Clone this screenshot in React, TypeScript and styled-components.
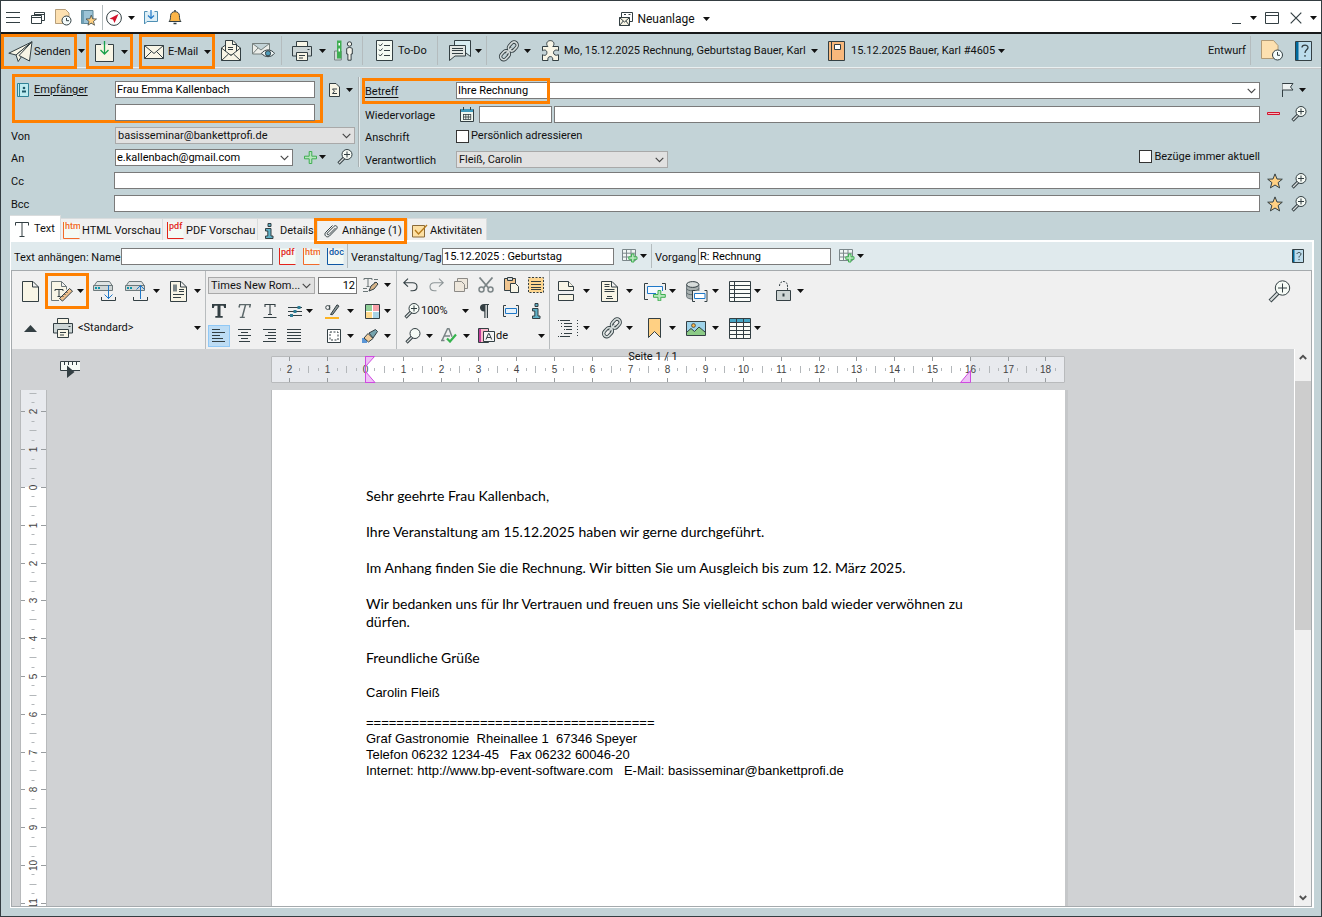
import React from 'react';
import styled, { createGlobalStyle, css } from 'styled-components';

const INK = '#333f43';
const CREAM = '#f8f5e6';
const ACCENT = '#ff8000';
const GREEN = '#3fae52';
const BLUE = '#1f78c8';
const ORANGE = '#ffd083';

const Global = createGlobalStyle`
  *, *::before, *::after { box-sizing: border-box; }
  html, body { margin: 0; }
  body { font-family: Roboto, 'Open Sans', sans-serif; font-size: 11px; line-height: 16px; color: #111; }
  button, input, select { font: inherit; color: inherit; margin: 0; }
  svg { display: block; flex: none; }
`;

/* ---------- icons ---------- */

const ext = (label: string, color: string): [number, number, React.ReactNode] => [
  17, 17,
  <>
    <path d="M.5 .5h16v16H.5z" fill="#f4faf4" />
    <path d="M.5 0v16.500h16" fill="none" stroke={color} />
    <text x="2" y="7" fontSize="9" fontWeight="500" fontFamily="Roboto, sans-serif" fill={color}>{label}</text>
  </>,
];

const lens = (
  <>
    <path d="M7.500 8.500 1.500 14.500" stroke={INK} strokeWidth="3.200" />
    <path d="M7.500 8.500 2 14" stroke="#d9dddd" strokeWidth="1.300" />
    <circle cx="10" cy="5.500" r="5" fill="#f6fbf6" stroke={INK} />
  </>
);

const printer = (
  <g stroke={INK}>
    <path d="M4.500 6V.5h11V6" fill={CREAM} />
    <path d="M.5 5.500h19v9.500H.5z" fill="#cdd6d6" />
    <path d="M15.500 8.500h2" />
    <path d="M4.500 11.500h11v8h-11z" fill={CREAM} />
    <path d="M7 14.500h6M7 17h4" />
  </g>
);

const link = (
  <g fill="none" transform="rotate(-48 11 11)">
    <g stroke={INK} strokeWidth="3.800">
      <rect x="-1" y="7.500" width="11" height="7" rx="3.500" />
      <rect x="12" y="7.500" width="11" height="7" rx="3.500" />
      <path d="M6.500 11h9" />
    </g>
    <g stroke="#d5dcdb" strokeWidth="1.900">
      <rect x="-1" y="7.500" width="11" height="7" rx="3.500" />
      <rect x="12" y="7.500" width="11" height="7" rx="3.500" />
      <path d="M6.500 11h9" />
    </g>
  </g>
);

const star = (
  <path
    d="M8 .9 10 6l5.300.2-4.200 3.400 1.500 5.300L8 12l-4.600 2.900 1.500-5.300L.7 6.200 6 6z"
    fill={ORANGE} stroke={INK}
  />
);

const helpBook = (
  <>
    <path d="M.5 .5h16v19H.5z" fill="#bcdcec" stroke={INK} />
    <path d="M1 1h2.500v18H1z" fill="#00699c" />
    <path d="M7 6.500c0-3 6-3.200 6 0 0 2.300-3 2.500-3 5.500M10 14v1.800" fill="none" stroke={INK} strokeWidth="1.300" />
  </>
);

const bars = (rows: [number, number][]) => (
  <g stroke={INK}>
    {rows.map(([a, b], i) => <path key={i} d={`M${a} ${i * 3 + 0.500}H${b}`} />)}
  </g>
);

const serverBox = (
  <g>
    <path d="M1 5 4 .5h12.500l3 4.500" fill="#dfe4e4" stroke="#6d787a" />
    <path d="M.5 4.500h19v5H.5z" fill="#cfd6d6" stroke="#6d787a" />
    <path d="M2 7h2M5 7h2" stroke="#0d93a8" strokeWidth="2" />
  </g>
);

const tablePlus = (
  <>
    <path d="M.5 .5h13v11H.5zM4.500 .5v11M9 .5v11M.5 4.200h13M.5 8h13" fill="#f1f6f5" stroke="#7b878a" />
    <path d="M9.500 5h2.500v2.800h3v2.500h-3V13H9.500v-2.700H6.800V7.800h2.700z" fill="#b7e6bd" stroke={GREEN} />
  </>
);

const foldedPage = <path d="M.5 .5h10.500l5.500 5.500v14.500H.5zM10.500 .5v5.500h6" fill={CREAM} stroke={INK} />;

const icons: Record<string, [number, number, React.ReactNode]> = {
  caret: [7, 4, <path d="M0 0h7L3.500 4z" fill="#111" />],
  chevron: [9, 6, <path d="M.7 .8 4.500 4.600 8.300 .8" fill="none" stroke="#454545" strokeWidth="1.100" />],
  menu: [14, 12, <path d="M0 .5h14M0 5.500h14M0 10.500h14" stroke={INK} />],
  windows: [14, 12, (
    <g fill="#fff" stroke={INK}>
      <path d="M3.500 3V.5h10v8H11" /><path d="M3 2.500h10" />
      <path d="M.5 3.500h10v8H.5z" /><path d="M.5 5.500h10" />
    </g>
  )],
  docClock: [17, 17, (
    <>
      <path d="M.5 .5h10L14 4v10.500H.5z" fill="#fde0b0" stroke="#a58a62" strokeWidth=".8" />
      <circle cx="11.500" cy="11.500" r="4.500" fill="#f4fbfb" stroke={INK} />
      <path d="M11.500 9v2.700H14" fill="none" stroke={INK} />
    </>
  )],
  docClockBig: [22, 21, (
    <>
      <path d="M.5 .5h12l4.500 5v13H.5z" fill="#fde0b0" stroke="#a58a62" strokeWidth=".8" />
      <circle cx="16.500" cy="15" r="5" fill="#f4fbfb" stroke={INK} />
      <path d="M16.500 12v3.300H19" fill="none" stroke={INK} />
    </>
  )],
  bookStar: [16, 16, (
    <>
      <path d="M.5 .5h11.500v13H.5z" fill="#9cc3d6" stroke="#5e8798" />
      <path d="M.5 .5H3v13H.5z" fill="#6f9fb5" />
      <g transform="translate(4.500 4.500) scale(.72)">{star}</g>
    </>
  )],
  compass: [16, 16, (
    <>
      <circle cx="8" cy="8" r="7.400" fill="#fff" stroke={INK} />
      <path d="M12.500 4 3.500 8.800 7 9.600 8.500 13z" fill="#d3122c" />
    </>
  )],
  chatDown: [14, 15, (
    <>
      <path d="M3.500 1.500H.5V14l2.500-2.500h10.500v-10h-3" fill="#dceef6" stroke="#4e8fb4" />
      <path d="M7 0v8.500M4 5.500l3 3 3-3" fill="none" stroke={BLUE} strokeWidth="1.200" />
    </>
  )],
  bell: [14, 15, (
    <>
      <path d="M1 11.500c1.600-1.500 1.400-3.500 1.600-6C2.900 2.800 4.600 1.700 7 1.700s4.100 1.100 4.400 3.800c.2 2.500 0 4.500 1.600 6z" fill="#fbb548" stroke={INK} />
      <path d="M5.500 13.500h3M7 0v1.500" stroke={INK} strokeWidth="1.600" />
    </>
  )],
  mailStack: [14, 14, (
    <g stroke={INK} fill="#fff">
      <path d="M2.500 5V.5h11v9H11" /><path d="M9.500 2.500h2M5 2.500h2" />
      <path d="M.5 5.500h10v8H.5z" fill={CREAM} /><path d="M.5 5.500 5.500 10l5-4.500M.5 13.500 4.300 9M10.500 13.500 6.900 9" fill="none" />
    </g>
  )],
  minimize: [9, 12, <path d="M0 11.500h9" stroke={INK} />],
  maximize: [14, 12, <path d="M.5 .5h13v11H.5zM.5 3.500h13" fill="none" stroke={INK} />],
  close: [12, 12, <path d="M.7 .7 11.300 11.300M11.300 .7.7 11.300" stroke={INK} strokeWidth="1.200" />],

  plane: [25, 22, (
    <g fill={CREAM} stroke={INK} strokeLinejoin="round">
      <path d="M24 .8 .8 12.200 8 14z" />
      <path d="M24 .8 8 14l2.200 6.500 3-4.500" />
      <path d="M24 .8 11 14.500 21.500 20z" />
    </g>
  )],
  inbox: [20, 21, (
    <>
      <path d="M6 3.500H.5v17h18v-17H13" fill={CREAM} stroke={INK} />
      <path d="M9.500 0v12.500M5.500 9l4 4 4-4" fill="none" stroke="#18a04a" strokeWidth="1.300" />
    </>
  )],
  mail: [20, 14, (
    <g fill={CREAM} stroke={INK}>
      <path d="M.5 .5h19v13H.5z" />
      <path d="m.5 .5 9.500 8 9.500-8M.5 13.500l7-7M19.500 13.500l-7-7" fill="none" />
    </g>
  )],
  mailOpen: [20, 21, (
    <g fill={CREAM} stroke={INK}>
      <path d="M.5 8 4.500 5v10z" /><path d="M19.500 8 15.500 5v10z" />
      <path d="M4.500 15V.5h7.500l3.500 3.500v11z" /><path d="M11.500 .5v4h4M7 7.500h5M7 9.500h5" fill="none" />
      <path d="M.5 8v12.500h19V8L10 15.500z" /><path d="m.5 20.500 7-6.500M19.500 20.500l-7-6.500" />
    </g>
  )],
  mailEye: [23, 15, (
    <>
      <path d="M.5 .5h17v10.500H.5zM.5 .5 9 7 17.500 .5M.5 11 6 5" fill="#eceeea" stroke="#76807f" />
      <path d="M9.500 10.300c3.500-4.500 9.500-4.500 13 0-3.500 4.500-9.500 4.500-13 0z" fill="#eef5f5" stroke={INK} />
      <circle cx="16" cy="10.300" r="2.600" fill="#4f9cba" stroke={INK} />
    </>
  )],
  printer: [20, 20, printer],
  people: [20, 21, (
    <>
      <path d="M4 11H.5v9h6.800v-9" fill="#cfd8d6" stroke="#7a8485" />
      <path d="M3 .5h4.500v18H3z" fill={GREEN} /><path d="M4.500 3h1.500v2.500H4.500zM4.500 8.500h1.500v3H4.500z" fill="#fff" />
      <circle cx="15.500" cy="4" r="2.200" fill="#f3f3ea" stroke={INK} />
      <path d="M12.700 8.500c1.500-1.300 4.300-1.300 5.600 0V14h-1.200v6.200h-3.200V14h-1.200z" fill="#f3f3ea" stroke={INK} />
    </>
  )],
  todo: [17, 21, (
    <>
      <path d="M.5 .5h16v20H.5z" fill="#f4faf3" stroke={INK} />
      <path d="m3 4.500 1.300 1.500L6.500 3.500M3 9.500 4.300 11l2.200-2.500M3 14.500 4.300 16l2.200-2.500M8 5.500h6M8 10.500h6M8 15.500h6" fill="none" stroke={INK} />
    </>
  )],
  chat: [22, 21, (
    <>
      <path d="M5.500 5V.5h16v16L17 13" fill="#d8ecf0" stroke={INK} />
      <path d="M.5 5.500h16v10.500H6L.5 20.500z" fill="#e3e7e4" stroke={INK} />
      <path d="M3 8.500h11M3 10.500h11M3 13.500h11" stroke={INK} />
    </>
  )],
  link: [22, 22, <g transform="translate(1 1) scale(.9)">{link}</g>],
  puzzle: [17, 21, (
    <path
      d="M.5 6.500h5.400C3.500 4 5 .6 8.300 .6s4.900 3.400 2.500 5.900h5.700v4.200c-2.600-1.500-5-.2-5 2s2.400 3.300 5 2v5.800h-5.900c.6-2.500-.4-3.900-2.300-3.900s-2.900 1.400-2.300 3.900H.5v-5.800c2.600 1.500 4.400.2 4.400-2s-1.800-3.500-4.400-2z"
      fill={CREAM} stroke={INK}
    />
  )],
  orangeBook: [17, 20, (
    <>
      <path d="M.5 .5h16v19H.5zM3.500 .5v19" fill="#f9b87c" stroke={INK} />
      <path d="M6.500 3.500h6v5h-6z" fill="#fff" stroke={INK} />
    </>
  )],
  help: [17, 20, helpBook],
  helpSmall: [12, 14, (
    <>
      <path d="M.5 .5h11v13H.5z" fill="#bcdcec" stroke={INK} />
      <path d="M1 1h1.500v12H1z" fill="#00699c" />
      <path d="M5 5c0-2 4-2 4 0 0 1.500-2 1.500-2 3.500M7 10v1.200" fill="none" stroke={INK} />
    </>
  )],

  contact: [12, 14, (
    <>
      <path d="M.5 .5h11v13H.5zM2.500 .5v13" fill="#bdebf0" stroke="#2f8296" />
      <circle cx="7" cy="5" r="1.300" fill="#1c5868" /><path d="M5 9.500h4V7.500H5z" fill="#1c5868" />
    </>
  )],
  sumDoc: [11, 14, (
    <>
      <path d="M.5 .5H7L10.500 4v9.500H.5z" fill={CREAM} stroke={INK} />
      <path d="M8 6H3.500l2 2.200-2 2.300H8" fill="none" stroke={INK} />
    </>
  )],
  plus: [13, 13, <path d="M5.200 .5h2.600v4.700h4.700v2.600H7.800v4.700H5.200V7.800H.5V5.200h4.700z" fill="#b7e6bd" stroke={GREEN} />],
  lensPlus: [16, 16, <>{lens}<path d="M10 2.500v6M7 5.500h6" stroke={INK} /></>],
  lens: [16, 16, lens],
  lensBig: [23, 23, (
    <>
      <path d="M11 12 2 21" stroke={INK} strokeWidth="4" /><path d="M11 12 2.500 20.500" stroke="#d9dddd" strokeWidth="2" />
      <circle cx="14.500" cy="8" r="7.200" fill="#f6fbf6" stroke={INK} /><path d="M14.500 3.500v9M10 8h9" stroke={INK} />
    </>
  )],
  calendar: [14, 15, (
    <>
      <path d="M.5 2.500h13v12H.5z" fill="#eef6ef" stroke={INK} />
      <path d="M1 2h12v3H1z" fill="#3f9abb" /><path d="M3.500 0v3M10.500 0v3" stroke={INK} />
      <path d="M3 7.500h8M3 10h8M3 12.500h8M3.500 7v5.500M5.800 7v5.500M8.300 7v5.500M10.700 7v5.500" stroke={INK} strokeWidth=".8" />
    </>
  )],
  flag: [12, 14, <><path d="M.5 0v14" stroke={INK} /><path d="M.5 .5h10.500L8.500 4l2.500 3H.5" fill="#edf2f2" stroke={INK} /></>],
  minus: [13, 4, <path d="M.5 .5h12v2H.5z" fill="#f3b7c0" stroke="#d3122c" />],
  star: [16, 16, star],

  textT: [14, 15, <path d="M.5 3.500V.5h13v3M7 .5v14M4.500 14.500h5" fill="none" stroke={INK} />],
  pdf: ext('pdf', '#e2231a'),
  htm: ext('htm', '#f26a2a'),
  doc: ext('doc', '#0d57a4'),
  info: [9, 16, (
    <path d="M3 .5h3v3H3zM.5 5.500H6v7.500h2v2.500H.5V13h2.300V8H.5z" fill="#5fb0c6" stroke={INK} />
  )],
  clip: [16, 16, (
    <path
      d="M12.500 5 6 11.500c-1 1-2.600-.4-1.600-1.500L11 3.300c1.800-1.800 4.400.6 2.600 2.500L6.500 13c-2.600 2.500-6.300-1-3.700-3.800L9.500 2.500"
      fill="none" stroke={INK}
    />
  )],
  task: [16, 14, (
    <>
      <path d="M.5 1.500h12v11.500H.5z" fill="#fde0a4" stroke="#8a6a3a" />
      <path d="m3 6 3.500 4L15 1" fill="none" stroke="#b57a1d" strokeWidth="1.300" />
    </>
  )],
  tablePlus: [16, 14, tablePlus],

  page: [17, 21, foldedPage],
  pageRuler: [22, 21, (
    <>
      <path d="M8 19.500H.5V.5h10l5 5v3M10.500 .5v5h5" fill={CREAM} stroke="#6d787a" />
      <path d="M4 10V8.500h8V10M8 8.500v7M6.500 15.500h3" fill="none" stroke={INK} />
      <path d="m8.500 17.500 10-10 3 2.600-10 10z" fill="#f0c08c" stroke={INK} />
      <path d="m11.500 15 1 1M13.500 13l1 1M15.500 11l1 1" stroke={INK} />
    </>
  )],
  serverDown: [23, 20, (
    <>{serverBox}<path d="M8.500 16v3.500h14V16" fill="none" stroke={INK} /><path d="M15.500 4v14M11.500 13.500l4 4 4-4" fill="none" stroke={BLUE} /></>
  )],
  serverUp: [23, 20, (
    <>{serverBox}<path d="M8.500 16v3.500h14V16" fill="none" stroke={INK} /><path d="M15.500 18V4M11.500 8.500l4-4 4 4" fill="none" stroke={BLUE} /></>
  )],
  article: [17, 21, (
    <>
      {foldedPage}
      <path d="M3 3.500h4v7H3z" fill="#7c8789" /><path d="M9 8.500h5M9 10.500h5M3 13.500h11M3 16.500h8" stroke={INK} />
    </>
  )],
  up: [13, 7, <path d="M6.500 0 13 7H0z" fill={INK} />],
  textBrush: [16, 14, (
    <>
      <path d="M1 2V.5h8V2M5 .5v8M3.500 8.500h3M11 1.500h4M11 4.500h2M0 10.500h4M0 13.500h5" fill="none" stroke="#6a7577" />
      <path d="m6 13 2-5 5-4 2 2-4 5z" fill="#d7b48a" stroke={INK} />
    </>
  )],
  bold: [14, 14, <path d="M0 4V0h14v4h-1.800L11.500 1.800h-3V12h2.200v1.800H3.300V12h2.200V1.800h-3L1.800 4z" fill={INK} />],
  italic: [14, 14, <path d="M2 3.500 2.800.6H13.300L12.600 3.500M8.600 .6 5.300 13M2.800 13.400h5" fill="none" stroke="#5c686a" strokeWidth="1.500" />],
  underline: [14, 15, <path d="M2 3V.5h10V3M7 .5v10M5 10.500h4M.5 13.500h13" fill="none" stroke={INK} strokeWidth="1.100" />],
  sliders: [15, 12, (
    <>
      <path d="M0 2.500h14M0 6.500h14M0 10.500h14" stroke={INK} />
      <path d="M9.500 1h3v3h-3zM5.500 5h3v3h-3zM2 9h3v3H2z" fill="#2d7d96" />
    </>
  )],
  highlighter: [15, 15, (
    <>
      <path d="M5.500 10.500 12 .8l2 1.300L7.500 10.700z" fill="#8c9799" stroke={INK} />
      <circle cx="2.700" cy="3.500" r="2" fill="none" stroke={INK} strokeWidth=".9" /><path d="M4.700 1v5" stroke={INK} strokeWidth=".9" />
      <path d="M0 14h14" stroke="#fdb425" strokeWidth="2" />
    </>
  )],
  palette: [15, 15, (
    <>
      <path d="M1 1h6.500v6.500H1z" fill="#8fcf97" /><path d="M7.500 1H14v6.500H7.500z" fill="#f7a0a8" />
      <path d="M1 7.500h6.500V14H1z" fill="#ffd98c" /><path d="M7.500 7.500H14V14H7.500z" fill="#a9d4e6" />
      <path d="M.5 .5h14v14H.5z" fill="none" stroke={INK} /><path d="M7.500 1v13M1 7.500h13" stroke="#fff" />
    </>
  )],
  alignLeft: [13, 13, bars([[0, 8], [0, 13], [0, 8], [0, 11], [0, 13]])],
  alignCenter: [13, 13, bars([[0, 13], [3, 10], [0, 13], [3, 10], [1, 12]])],
  alignRight: [13, 13, bars([[0, 13], [5, 13], [2, 13], [5, 13], [0, 13]])],
  alignJustify: [14, 13, bars([[0, 14], [0, 14], [0, 14], [0, 14], [0, 14]])],
  frame: [14, 14, (
    <><path d="M.5 .5h13v13H.5z" fill="#fff" stroke={INK} /><path d="M3 3h8v8H3z" fill="none" stroke={INK} strokeDasharray="2 1.500" /></>
  )],
  brush: [16, 14, (
    <>
      <path d="M0 9h5v5H0z" fill="#5b96d6" />
      <path d="m2 9 4-4.500 5 5L6.500 13z" fill="#f0cd9e" stroke={INK} /><path d="m7 4 6.500-3.500 2 2L11 9z" fill="#75a3ad" stroke={INK} />
    </>
  )],
  undo: [15, 14, <path d="M5 .7 .8 4.700 5 8.700M.8 4.700h8.700c6 0 6 8 0 8H7.500" fill="none" stroke={INK} strokeWidth="1.100" />],
  redo: [15, 14, <path d="M10 .7 14.200 4.700 10 8.700M14.200 4.700H5.500c-6 0-6 8 0 8h2" fill="none" stroke="#8c9496" strokeWidth="1.100" />],
  copies: [14, 14, (
    <g fill="#eee7dc" stroke="#8c8a86"><path d="M3.500 3.500V.5h10v10h-3" /><path d="M.5 3.500h7l3 3v7H.5z" /></g>
  )],
  cut: [16, 16, (
    <>
      <path d="M1.500 .5 11 11.500M14.500 .5 5 11.500" stroke="#7b8486" strokeWidth="1.800" />
      <circle cx="3.500" cy="12.500" r="2.500" fill="none" stroke="#7d8688" strokeWidth="1.500" /><circle cx="12.500" cy="12.500" r="2.500" fill="none" stroke="#7d8688" strokeWidth="1.500" />
    </>
  )],
  paste: [15, 16, (
    <>
      <path d="M.5 1.500h11v12H.5z" fill="#f0c590" stroke={INK} /><path d="M3.500 .5h5v3h-5z" fill="#d9dede" stroke={INK} />
      <path d="M6.500 6.500h5l3 3v6h-8z" fill={CREAM} stroke={INK} />
    </>
  )],
  selectAll: [16, 16, (
    <>
      <path d="M.5 .5h15v15H.5z" fill="#fdd58e" stroke={INK} strokeDasharray="2 1.500" />
      <path d="M3 4.500h10M3 7.500h10M3 10.500h10M3 12.500h10" stroke={INK} />
    </>
  )],
  pilcrow: [9, 14, <path d="M4 0h5v1H8v13H6.800V1H5.500v13H4.300V7.500C-1.400 7.500-1.400 0 4 0z" fill={INK} />],
  field: [16, 12, (
    <><path d="M3 .5H.5v11H3M13 .5h2.500v11H13" fill="none" stroke={INK} /><path d="M2.500 3.500h11v5h-11z" fill="#e6f2fb" stroke={BLUE} /></>
  )],
  spell: [16, 15, (
    <>
      <path d="M1 12.500 6.500 .8h1.500l3 8M3 8h6M0 12.500h3.500" fill="none" stroke="#7a8486" strokeWidth="1.500" />
      <path d="m6 10.500 3 3L15 6.500" fill="none" stroke="#35b34d" strokeWidth="2.200" />
    </>
  )],
  language: [17, 15, (
    <>
      <path d="M.5 .5h10v14H.5z" fill="#fbb9cb" stroke={INK} /><path d="M1 1h2v13H1z" fill="#c23f9b" />
      <path d="M5.500 3.500h11v10h-11z" fill="#f4f4f4" stroke={INK} />
      <path d="m8 11.500 2.500-6h.7l2.500 6M9 9.500h4" fill="none" stroke={INK} />
    </>
  )],
  pageBreak: [17, 21, (
    <g fill={CREAM} stroke={INK}><path d="M.5 9.500v-9h10l5 5v4z" /><path d="M10.500 .5v5h5" /><path d="M.5 13.500h15v6H.5z" /></g>
  )],
  textPage: [17, 21, (
    <>
      {foldedPage}
      <path d="M3.500 3.500h5M3.500 5.500h5M3.500 8.500h10M3.500 10.500h10M6 15.500h5M5 17.500h7" stroke={INK} />
    </>
  )],
  fieldPlus: [22, 20, (
    <>
      <path d="M4 2.500H.5v16H4M18 2.500h3.500V9" fill="none" stroke={INK} />
      <path d="M12 12.500H3.500v-7h15V10" fill="#f5faff" stroke={BLUE} />
      <path d="M14 9.500h2.800v4h4.500v2.800h-4.500v3.500H14v-3.500H9.500v-2.800H14z" fill="#b7e6bd" stroke={GREEN} />
    </>
  )],
  database: [22, 21, (
    <>
      <path d="M.6 3.500v12c0 3.400 12.300 3.400 12.300 0v-12" fill="#a9b1b1" stroke="#69747a" />
      <ellipse cx="6.700" cy="3.500" rx="6.100" ry="2.900" fill="#d7dcdb" stroke={INK} />
      <path d="M.6 7.500c0 3 12.300 3 12.300 0M.6 11.500c0 3 12.300 3 12.300 0" fill="none" stroke="#5c686a" />
      <path d="M6 10h15.500v10.500H6z" fill="#f0f0f0" /><path d="M9 9.500H6.500v11H9M18.500 9.500H21v11h-2.500" fill="none" stroke={INK} />
      <path d="M8.500 12.500h10.500v5H8.500z" fill="#fff" stroke={BLUE} />
    </>
  )],
  list: [22, 21, <path d="M.5 .5h21v20H.5zM5.500 .5v20M.5 4.500h21M.5 8.500h21M.5 12.500h21M.5 16.500h21" fill="#fafcf8" stroke={INK} />],
  lock: [15, 20, (
    <><path d="M3.500 5C3.500-1 11.500-1 11.500 5v4" fill="none" stroke={INK} strokeDasharray="2 1" /><path d="M.5 9.500h14v10H.5z" fill="#ced5d4" stroke={INK} /><path d="M6.500 12.500h2v3h-2z" fill={INK} /></>
  )],
  bullets: [20, 19, (
    <>
      <path d="M0 1.500h1M2 1.500h10M3 4.500h1M6 4.500h8M3 7.500h1M6 7.500h8M6 10.500h1M8 10.500h6M3 14.500h1M6 14.500h8M0 17.500h1M2 17.500h10" stroke={INK} />
      <path d="M19.500 1v18" stroke={INK} strokeDasharray="1 2" />
    </>
  )],
  bookmark: [14, 21, <path d="M.5 .5h12v19L6.500 13.500.5 19.500z" fill={ORANGE} stroke={INK} />],
  image: [20, 15, (
    <>
      <path d="M.5 .5h19v14H.5z" fill="#9ed3ea" />
      <path d="M1 14V11l4-3.500 3.500 3L13 6l6 5v3z" fill="#8ccb86" /><path d="m1 11 4-3.500 3.500 3L13 6l6 5" fill="none" stroke={INK} />
      <circle cx="7.500" cy="4.500" r="1.900" fill="#fbb548" stroke={INK} strokeWidth=".8" /><path d="M.5 .5h19v14H.5z" fill="none" stroke={INK} />
    </>
  )],
  table: [22, 21, (
    <>
      <path d="M.5 .5h21v20H.5z" fill="#fafcf8" /><path d="M.5 .5h21v4H.5z" fill="#45a5c4" />
      <path d="M.5 .5h21v20H.5zM7.500 .5v20M14.500 .5v20M.5 4.500h21M.5 8.500h21M.5 12.500h21M.5 16.500h21" fill="none" stroke={INK} />
    </>
  )],
  rulerPlay: [20, 17, (
    <><path d="M20 .5H.5v9H20" fill="#f6fbf6" stroke={INK} /><path d="M4.500 1v3M8.500 1v3M12.500 1v3M16.500 1v3" stroke={INK} /><path d="M7 4.500 14.500 11 7 17z" fill={INK} /></>
  )],
  scrollUp: [8, 6, <path d="M.8 5 4 1.800 7.200 5" fill="none" stroke="#505050" strokeWidth="1.800" />],
  scrollDown: [8, 6, <path d="M.8 1 4 4.200 7.200 1" fill="none" stroke="#505050" strokeWidth="1.800" />],
};

const Icon = ({ name }: { name: string }) => {
  const [w, h, body] = icons[name];
  return <svg width={w} height={h} viewBox={`0 0 ${w} ${h}`} aria-hidden="true">{body}</svg>;
};

/* ---------- shared parts ---------- */

const AppWindow = styled.div`
  display: flex; flex-direction: column; height: 100vh; min-height: 600px; overflow: hidden;
  border: 1px solid #343d41; background: #c3d3d7;
`;

const Tool = styled.button<{ $w?: number; $pl?: number; $gap?: number; $active?: boolean }>`
  display: flex; flex: none; align-items: center; height: 100%; padding: 0 0 0 ${p => p.$pl ?? 0}px;
  width: ${p => (p.$w ? `${p.$w}px` : 'auto')}; gap: ${p => p.$gap ?? 6}px;
  border: 0; background: none; white-space: nowrap; cursor: pointer;
  ${p => p.$active && css`height: 22px; background: #bddcf4; border: 1px solid #90c8f6;`}
`;

const Marked = styled.div<{ $w: number; $h: number }>`
  display: flex; flex: none; align-items: center; width: ${p => p.$w}px; height: ${p => p.$h}px;
  border: 3px solid ${ACCENT};
`;

const Divider = styled.span`
  flex: none; align-self: stretch; width: 1px; margin: 2px 0; background: #b4bcbe;
`;

const Spacer = styled.span`flex: 1;`;

const TextInput = styled.input<{ $w?: number; $right?: boolean }>`
  ${p => (p.$w ? `flex: none; width: ${p.$w}px;` : 'flex: 1; min-width: 0;')}
  height: 17px; padding: 0 1px; border: 1px solid #7a7a7a; background: #fff; outline: 0; color: #000;
  text-align: ${p => (p.$right ? 'right' : 'left')};
`;

const ComboWrap = styled.span<{ $w?: number }>`
  position: relative; display: flex;
  ${p => (p.$w ? `flex: none; width: ${p.$w}px;` : 'flex: 1; min-width: 0;')}
  svg { position: absolute; right: 4px; top: 6px; pointer-events: none; }
`;

const SelectBox = styled.select`
  appearance: none; width: 100%; height: 17px; padding: 0 12px 0 2px; line-height: 15px;
  border: 1px solid #a9a9a9; border-radius: 0; background: #e1e1e1; color: #111;
`;

const Select = ({ label, value, w }: { label: string; value: string; w: number }) => (
  <ComboWrap $w={w}>
    <SelectBox aria-label={label} defaultValue={value}><option>{value}</option></SelectBox>
    <Icon name="chevron" />
  </ComboWrap>
);

const Combo = ({ label, value, w }: { label: string; value: string; w?: number }) => (
  <ComboWrap $w={w}>
    <TextInput aria-label={label} defaultValue={value} />
    <Icon name="chevron" />
  </ComboWrap>
);

/* ---------- title bar ---------- */

const TitleBar = styled.header`
  display: grid; grid-template-columns: 1fr auto 1fr; flex: none; height: 33px;
  background: #fff; border-bottom: 2px solid #17191a;
`;
const TitleSide = styled.div<{ $end?: boolean }>`
  display: flex; align-items: center; padding: 2px 0 0 5px;
  justify-content: ${p => (p.$end ? 'flex-end' : 'flex-start')};
`;
const Title = styled.h1`
  display: flex; align-items: center; margin: 0; gap: 4px; font-size: 12px; font-weight: 400; padding: 4px 0 0 7px;
`;

/* ---------- command bar ---------- */

const CommandBar = styled.nav`
  position: relative; z-index: 1; display: flex; align-items: flex-start; flex: none; height: 34px;
  border-bottom: 1px solid #e9eff0;
`;

/* ---------- mail form ---------- */

const Form = styled.form`
  display: flex; flex-direction: column; flex: none; border-top: 1px solid #c6c9ca;
`;
const Columns = styled.div`display: flex; padding-bottom: 1px;`;
const LeftColumn = styled.div`flex: none; width: 357px; padding-top: 5px;`;
const RightColumn = styled.div`
  position: relative; flex: 1; min-width: 0; padding-top: 9px;
`;
const ColumnRule = styled.span`flex: none; width: 2px; margin: 8px 0 1px; background: #e4ebec; border-left: 1px solid #a8b0b2;`;
const Row = styled.div<{ $h: number; $pl?: number; $bottom?: boolean }>`
  display: flex; align-items: ${p => (p.$bottom ? 'flex-end' : 'center')};
  height: ${p => p.$h}px; padding-left: ${p => p.$pl ?? 10}px;
`;
const Label = styled.label<{ $w: number }>`
  flex: none; width: ${p => p.$w}px; padding-top: 2px; line-height: 15px; white-space: nowrap;
`;
const LabelLink = styled.a`color: inherit; text-decoration: underline; text-underline-offset: 2px;`;
const Recipient = styled.div`
  display: flex; margin-left: 11px; width: 311px; height: 49px; border: 3px solid ${ACCENT}; padding: 4px 5px 0 2px;
`;
const RecipientRow = styled.div`display: flex; align-items: flex-start;`;
const RecipientTools = styled.div`display: flex; height: 32px;`;
const Stack = styled.div`display: flex; flex-direction: column; gap: 6px; width: 200px; input { flex: none; }`;
const RecipientLabel = styled.span`display: flex; align-items: center; gap: 5px; width: 98px; height: 17px;`;
const SubjectMark = styled.span`
  position: absolute; left: 2px; top: 9px; width: 188px; height: 26px; border: 3px solid ${ACCENT}; pointer-events: none;
`;
const Check = styled.label<{ $top?: boolean }>`
  display: flex; align-items: center; gap: 2px; height: 21px; white-space: nowrap;
  align-self: ${p => (p.$top ? 'flex-start' : 'center')};
  input { appearance: none; width: 13px; height: 13px; border: 1px solid #333; background: #fff; }
`;
const SideTools = styled.div`display: flex; flex: none; width: 61px; height: 20px;`;

/* ---------- tabs ---------- */

const Tabs = styled.div`display: flex; align-items: flex-end; flex: none; height: 25px; padding-left: 9px;`;
const Tab = styled.button<{ $w: number; $on?: boolean; $gap?: number; $pl?: number }>`
  position: relative; display: flex; align-items: center; flex: none; width: ${p => p.$w}px;
  height: ${p => (p.$on ? 25 : 22)}px; gap: ${p => p.$gap ?? 3}px; padding: 2px 0 0 ${p => p.$pl ?? 3}px;
  border: 1px solid #d9dcdd; border-width: 1px 1px 0 0; white-space: nowrap;
  background: ${p => (p.$on ? '#fff' : '#f0f0f0')};
`;
const TabMark = styled.span`
  position: absolute; z-index: 2; left: -4px; top: -1px; width: 93px; height: 26px; border: 3px solid ${ACCENT};
`;
const Panel = styled.section`
  display: flex; flex-direction: column; flex: 1; min-height: 0; margin: 0 7px 8px 9px;
  border: solid #fff; border-width: 2px 2px 1px 1px;
`;
const AttachBar = styled.div`
  display: flex; align-items: center; flex: none; height: 28px; padding-left: 3px; background: #e0eaed;
`;

/* ---------- editor ---------- */

const Editor = styled.div`
  display: flex; flex-direction: column; flex: 1; min-height: 0; border: 1px solid #a5aaad; background: #d0d2d4;
`;
const Ribbon = styled.div`display: flex; flex: none; height: 78px; background: #f0f0f0;`;
const Group = styled.div<{ $w?: number; $rows: number }>`
  display: grid; flex: none; width: ${p => (p.$w ? `${p.$w}px` : 'auto')};
  grid-template-rows: ${p => (p.$rows === 3 ? '28px 24px 25px' : '40px 34px')};
  border-right: 1px solid ${p => (p.$w ? '#b8bcbe' : 'transparent')};
`;
const RibbonRow = styled.div<{ $pl?: number }>`
  display: flex; align-items: center; min-width: 0; padding-left: ${p => p.$pl ?? 1}px;
`;
const Work = styled.div`display: flex; flex: 1; min-height: 0; overflow: hidden;`;
const RulerGutter = styled.div`
  display: flex; flex-direction: column; flex: none; width: 34px; padding-left: 8px;
`;
const GutterTop = styled.div`flex: none; height: 41px; padding: 12px 0 0 40px; width: 80px;`;
const Canvas = styled.div`
  display: flex; flex-direction: column; flex: 1; min-width: 0; align-items: center; padding-right: 4px; overflow: hidden;
`;
const RulerStrip = styled.div`position: relative; flex: none; width: 794px; height: 41px; padding-top: 7px;`;
const PageLabel = styled.span`
  position: absolute; left: 0; right: 30px; top: 0; line-height: 15px; text-align: center;
`;
const Page = styled.article`
  flex: none; width: 794px; min-height: 1123px; padding: 97px 94px; background: #fff;
  border-left: 1px solid #b8babc; box-shadow: 3px 0 0 #c5c7c9;
  font: 14px/18px Lato, 'Open Sans', sans-serif; color: #000;
  p { margin: 0 0 18px; }
`;
const Signature = styled.div`
  font: 13px/16px 'Liberation Sans', Arial, sans-serif; white-space: pre;
  p { margin: 0 0 14px; }
`;
const Scrollbar = styled.div`
  display: flex; flex-direction: column; flex: none; width: 17px; background: #f0f0f0; border-left: 1px solid #fff;
`;
const ScrollButton = styled.button`
  display: flex; align-items: center; justify-content: center; height: 16px; padding: 0; border: 0; background: none;
`;
const ScrollTrack = styled.div`flex: 1; padding-top: 16px;`;
const ScrollThumb = styled.div`height: 49%; background: #cdcdcd;`;

const CM = 37.795;

const Ruler = ({ vertical }: { vertical?: boolean }) => {
  const length = vertical ? 1123 : 794;
  const zero = vertical ? 97 : 94;
  const marks: React.ReactNode[] = [];
  const first = vertical ? -10 : -9;
  const last = vertical ? 44 : 73;
  for (let q = first; q <= last; q++) {
    const at = Math.round(zero + (q * CM) / 4) + 0.5;
    if (q % 4 === 0) {
      const n = String(Math.abs(q / 4));
      marks.push(
        vertical
          ? <g key={q}><path d={`M0 ${at}h5M21 ${at}h5`} stroke="#999da0" /><text transform={`translate(16.500 ${at}) rotate(-90)`} textAnchor="middle">{n}</text></g>
          : <g key={q}><path d={`M${at} 0v5M${at} 22v5`} stroke="#999da0" /><text x={at} y="16.500" textAnchor="middle">{n}</text></g>,
      );
    } else {
      const r = q % 2 === 0 ? 3.5 : 1.5;
      marks.push(<path key={q} stroke="#b3b7ba" d={vertical ? `M${13 - r} ${at}h${2 * r}` : `M${at} ${13.5 - r}v${2 * r}`} />);
    }
  }
  return (
    <svg
      width={vertical ? 27 : length} height={vertical ? length : 27}
      fontFamily="Liberation Sans, Arial, sans-serif" fontSize="10" fill="#444"
    >
      <rect width="100%" height="100%" fill="#e8eaee" />
      {vertical
        ? <rect x="0" y={zero} width="27" height="1026" fill="#fff" />
        : <rect x={zero} y="0" width="605" height="27" fill="#fff" />}
      {marks}
      {vertical
        ? <path d={`M.5 0v${length}M26.500 0v${length}`} stroke="#b8babc" />
        : <path d={`M.5 .5h${length - 1}v26H.5z`} fill="none" stroke="#b8babc" />}
      {!vertical && (
        <g fill="#e9b3f2" fillOpacity=".8" stroke="#cf4ae0">
          <path d="M94.500 .5h9l-9 10zM94.500 26.500h9.500l-9.500-11z" />
          <path d="M94.500 0v27" />
          <path d="M699.500 14.500v12h-10z" />
        </g>
      )}
    </svg>
  );
};

const CaretTool = ({ w, pl, label }: { w: number; pl?: number; label: string }) => (
  <Tool type="button" $w={w} $pl={pl} aria-label={label}><Icon name="caret" /></Tool>
);

const IconTool = ({ icon, w, pl, label, active }: { icon: string; w: number; pl?: number; label: string; active?: boolean }) => (
  <Tool type="button" $w={w} $pl={pl} $active={active} aria-label={label}><Icon name={icon} /></Tool>
);

const insertTop: [string, string, number, number][] = [
  ['pageBreak', 'Umbruch', 26, 17], ['textPage', 'Textbaustein', 26, 17], ['fieldPlus', 'Feld einfügen', 26, 16],
  ['database', 'Datenfeld', 27, 16], ['list', 'Liste', 26, 21], ['lock', 'Schutz', 22, 16],
];
const insertBottom: [string, string, number, number][] = [
  ['bullets', 'Aufzählung', 26, 17], ['link', 'Hyperlink', 26, 21], ['bookmark', 'Textmarke', 22, 16],
  ['image', 'Bild', 27, 16], ['table', 'Tabelle', 26, 21],
];

export default function App() {
  return (
    <AppWindow>
      <Global />
      <TitleBar>
        <TitleSide>
          <IconTool icon="menu" w={25} label="Menü" />
          <IconTool icon="windows" w={24} label="Fenster" />
          <IconTool icon="docClock" w={26} label="Verlauf" />
          <IconTool icon="bookStar" w={21} label="Favoriten" />
          <Divider />
          <IconTool icon="compass" w={25} pl={3} label="Navigation" />
          <CaretTool w={16} label="Navigation Optionen" />
          <IconTool icon="chatDown" w={24} label="Nachrichten" />
          <IconTool icon="bell" w={20} label="Erinnerungen" />
        </TitleSide>
        <Title><Icon name="mailStack" />Neuanlage<CaretTool w={11} pl={4} label="Ansichten" /></Title>
        <TitleSide $end>
          <IconTool icon="minimize" w={18} label="Minimieren" />
          <CaretTool w={15} label="Minimieren Optionen" />
          <IconTool icon="maximize" w={25} label="Maximieren" />
          <IconTool icon="close" w={20} label="Schließen" />
          <CaretTool w={11} label="Schließen Optionen" />
        </TitleSide>
      </TitleBar>

      <CommandBar>
        <Marked $w={76} $h={35}><Tool type="button" $pl={4} $gap={1}><Icon name="plane" />Senden</Tool></Marked>
        <CaretTool w={9} pl={1} label="Senden Optionen" />
        <Marked $w={47} $h={35}><Tool type="button" $pl={6} aria-label="Speichern"><Icon name="inbox" /><Icon name="caret" /></Tool></Marked>
        <Tool as="span" $w={6} />
        <Marked $w={76} $h={35}><Tool type="button" $pl={2} $gap={4}><Icon name="mail" />E-Mail</Tool><CaretTool w={13} pl={6} label="E-Mail Optionen" /></Marked>
        <IconTool icon="mailOpen" w={37} pl={6} label="E-Mail öffnen" />
        <IconTool icon="mailEye" w={29} label="Vorschau" />
        <Divider />
        <Tool type="button" $w={51} $pl={10} $gap={7} aria-label="Drucken"><Icon name="printer" /><Icon name="caret" /></Tool>
        <IconTool icon="people" w={29} pl={1} label="Personen" />
        <Divider />
        <Tool type="button" $w={74} $pl={13} $gap={5}><Icon name="todo" />To-Do</Tool>
        <Divider />
        <Tool type="button" $w={48} $pl={11} $gap={4} aria-label="Notizen"><Icon name="chat" /><Icon name="caret" /></Tool>
        <Divider />
        <Tool type="button" $w={55} $pl={11} $gap={4} aria-label="Verknüpfungen"><Icon name="link" /><Icon name="caret" /></Tool>
        <Tool type="button" $w={269} $gap={5}><Icon name="puzzle" />Mo, 15.12.2025 Rechnung, Geburtstag Bauer, Karl</Tool>
        <CaretTool w={17} label="Bezug Optionen" />
        <Tool type="button" $w={170} $gap={6}><Icon name="orangeBook" />15.12.2025 Bauer, Karl #4605</Tool>
        <CaretTool w={17} label="Veranstaltung Optionen" />
        <Spacer />
        <Tool as="span" $w={42}>Entwurf</Tool>
        <Divider />
        <IconTool icon="docClockBig" w={44} pl={10} label="Historie" />
        <IconTool icon="help" w={26} label="Hilfe" />
      </CommandBar>

      <Form>
        <Columns>
          <LeftColumn>
            <RecipientRow>
              <Recipient>
                <RecipientLabel><Icon name="contact" /><LabelLink href="#empfaenger">Empfänger</LabelLink></RecipientLabel>
                <Stack>
                  <TextInput aria-label="Empfänger" defaultValue="Frau Emma Kallenbach" />
                  <TextInput aria-label="Empfänger Zusatz" />
                </Stack>
              </Recipient>
              <RecipientTools>
                <Tool type="button" $pl={6} aria-label="Anrede"><Icon name="sumDoc" /><Icon name="caret" /></Tool>
              </RecipientTools>
            </RecipientRow>
            <Row $h={24}><Label as="span" $w={104}>Von</Label><Select label="Von" value="basisseminar@bankettprofi.de" w={240} /></Row>
            <Row $h={20}>
              <Label as="span" $w={104}>An</Label>
              <Combo label="An" value="e.kallenbach@gmail.com" w={178} />
              <Tool type="button" $w={44} $pl={11} $gap={2} aria-label="Empfänger hinzufügen"><Icon name="plus" /><Icon name="caret" /></Tool>
              <IconTool icon="lensPlus" w={16} label="Suchen" />
            </Row>
          </LeftColumn>
          <ColumnRule />
          <RightColumn>
            <Row $h={24} $pl={5}>
              <Label as="span" $w={91}><LabelLink href="#betreff">Betreff</LabelLink></Label>
              <Combo label="Betreff" value="Ihre Rechnung" />
              <SideTools><Tool type="button" $pl={22} $gap={5} aria-label="Kennzeichnung"><Icon name="flag" /><Icon name="caret" /></Tool></SideTools>
            </Row>
            <Row $h={24} $pl={5}>
              <Label htmlFor="wv" $w={91}>Wiedervorlage</Label>
              <IconTool icon="calendar" w={23} pl={4} label="Kalender" />
              <TextInput id="wv" $w={73} />
              <Tool as="span" $w={2} />
              <TextInput aria-label="Wiedervorlage Notiz" />
              <SideTools><IconTool icon="minus" w={31} pl={7} label="Entfernen" /><IconTool icon="lensPlus" w={16} label="Suchen" /></SideTools>
            </Row>
            <Row $h={20} $pl={5}>
              <Label as="span" $w={91}>Anschrift</Label>
              <Check><input type="checkbox" />Persönlich adressieren</Check>
            </Row>
            <Row $h={22} $pl={5} $bottom>
              <Label as="span" $w={91}>Verantwortlich</Label>
              <Select label="Verantwortlich" value="Fleiß, Carolin" w={212} />
              <Spacer />
              <Check $top><input type="checkbox" />Bezüge immer aktuell</Check>
              <SideTools />
            </Row>
            <SubjectMark />
          </RightColumn>
        </Columns>
        {['Cc', 'Bcc'].map(name => (
          <Row key={name} $h={23}>
            <Label htmlFor={name} $w={103}>{name}</Label>
            <TextInput id={name} />
            <SideTools><IconTool icon="star" w={31} pl={7} label={`${name} Favoriten`} /><IconTool icon="lensPlus" w={16} label={`${name} suchen`} /></SideTools>
          </Row>
        ))}
      </Form>

      <Tabs role="tablist">
        <Tab role="tab" $w={51} $on $pl={5} $gap={5}><Icon name="textT" />Text</Tab>
        <Tab role="tab" $w={102} $pl={2} $gap={2}><Icon name="htm" />HTML Vorschau</Tab>
        <Tab role="tab" $w={95} $pl={4} $gap={2}><Icon name="pdf" />PDF Vorschau</Tab>
        <Tab role="tab" $w={60} $pl={7} $gap={6}><Icon name="info" />Details</Tab>
        <Tab role="tab" $w={90} $pl={5}><Icon name="clip" />Anhänge (1)<TabMark /></Tab>
        <Tab role="tab" $w={79} $pl={4} $gap={2}><Icon name="task" />Aktivitäten</Tab>
      </Tabs>

      <Panel>
        <AttachBar>
          <Label htmlFor="anhang" $w={107}>Text anhängen: Name</Label>
          <TextInput id="anhang" $w={152} />
          <IconTool icon="pdf" w={30} pl={6} label="PDF" />
          <IconTool icon="htm" w={24} label="HTML" />
          <IconTool icon="doc" w={20} label="DOC" />
          <Divider />
          <Tool as="span" $w={3} />
          <Label htmlFor="tag" $w={91}>Veranstaltung/Tag</Label>
          <TextInput id="tag" $w={172} defaultValue="15.12.2025 : Geburtstag" />
          <Tool type="button" $w={37} $pl={8} $gap={2} aria-label="Veranstaltung wählen"><Icon name="tablePlus" /><Icon name="caret" /></Tool>
          <Divider />
          <Tool as="span" $w={3} />
          <Label htmlFor="vorgang" $w={43}>Vorgang</Label>
          <TextInput id="vorgang" $w={133} defaultValue="R: Rechnung" />
          <Tool type="button" $w={37} $pl={8} $gap={2} aria-label="Vorgang wählen"><Icon name="tablePlus" /><Icon name="caret" /></Tool>
          <Spacer />
          <IconTool icon="helpSmall" w={20} label="Hilfe" />
        </AttachBar>

        <Editor>
          <Ribbon>
            <Group $w={194} $rows={2}>
              <RibbonRow $pl={10}>
                <IconTool icon="page" w={23} label="Neu" />
                <Marked $w={44} $h={36}><Tool type="button" $pl={3} $gap={4} aria-label="Vorlage"><Icon name="pageRuler" /><Icon name="caret" /></Tool></Marked>
                <IconTool icon="serverDown" w={36} pl={4} label="Laden" />
                <IconTool icon="serverUp" w={28} label="Speichern" />
                <CaretTool w={17} label="Speichern Optionen" />
                <IconTool icon="article" w={24} label="Layout" />
                <CaretTool w={9} label="Layout Optionen" />
              </RibbonRow>
              <RibbonRow $pl={12}>
                <IconTool icon="up" w={29} label="Einklappen" />
                <Tool type="button" $w={141} $gap={5}><Icon name="printer" />&lt;Standard&gt;</Tool>
                <CaretTool w={9} label="Drucker" />
              </RibbonRow>
            </Group>
            <Group $w={191} $rows={3}>
              <RibbonRow $pl={2}>
                <Select label="Schriftart" value="Times New Rom..." w={107} />
                <Tool as="span" $w={3} />
                <TextInput aria-label="Schriftgröße" $w={39} $right defaultValue="12" />
                <IconTool icon="textBrush" w={27} pl={6} label="Format" />
                <CaretTool w={9} label="Format Optionen" />
              </RibbonRow>
              <RibbonRow $pl={6}>
                <IconTool icon="bold" w={25} label="Fett" />
                <IconTool icon="italic" w={26} label="Kursiv" />
                <IconTool icon="underline" w={25} label="Unterstrichen" />
                <Tool type="button" $w={37} $gap={3} aria-label="Zeichen"><Icon name="sliders" /><Icon name="caret" /></Tool>
                <Tool type="button" $w={40} $gap={7} aria-label="Markieren"><Icon name="highlighter" /><Icon name="caret" /></Tool>
                <Tool type="button" $w={28} $gap={4} aria-label="Farbe"><Icon name="palette" /><Icon name="caret" /></Tool>
              </RibbonRow>
              <RibbonRow $pl={2}>
                <IconTool icon="alignLeft" w={22} pl={3} active label="Linksbündig" />
                <IconTool icon="alignCenter" w={33} pl={8} label="Zentriert" />
                <IconTool icon="alignRight" w={24} label="Rechtsbündig" />
                <IconTool icon="alignJustify" w={40} label="Blocksatz" />
                <Tool type="button" $w={35} $gap={6} aria-label="Rahmen"><Icon name="frame" /><Icon name="caret" /></Tool>
                <Tool type="button" $w={30} $gap={6} aria-label="Pinsel"><Icon name="brush" /><Icon name="caret" /></Tool>
              </RibbonRow>
            </Group>
            <Group $w={153} $rows={3}>
              <RibbonRow $pl={6}>
                <IconTool icon="undo" w={26} label="Rückgängig" />
                <IconTool icon="redo" w={25} label="Wiederholen" />
                <IconTool icon="copies" w={24} label="Kopieren" />
                <IconTool icon="cut" w={26} label="Ausschneiden" />
                <IconTool icon="paste" w={24} label="Einfügen" />
                <IconTool icon="selectAll" w={16} label="Alles markieren" />
              </RibbonRow>
              <RibbonRow $pl={7}>
                <Tool type="button" $w={58} $gap={1}><Icon name="lensPlus" />100%</Tool>
                <CaretTool w={18} label="Zoom" />
                <IconTool icon="pilcrow" w={23} label="Absatzmarken" />
                <IconTool icon="field" w={29} label="Felder" />
                <IconTool icon="info" w={9} label="Info" />
              </RibbonRow>
              <RibbonRow $pl={8}>
                <Tool type="button" $w={36} $gap={5} aria-label="Suchen"><Icon name="lens" /><Icon name="caret" /></Tool>
                <Tool type="button" $w={37} $gap={6} aria-label="Rechtschreibung"><Icon name="spell" /><Icon name="caret" /></Tool>
                <Tool type="button" $w={60} $gap={1}><Icon name="language" />de</Tool>
                <CaretTool w={9} label="Sprache" />
              </RibbonRow>
            </Group>
            <Group $rows={2}>
              {[insertTop, insertBottom].map((items, i) => (
                <RibbonRow key={i} $pl={7}>
                  {items.map(([icon, label, iconWidth, rest]) => (
                    <React.Fragment key={icon}>
                      <IconTool icon={icon} w={iconWidth} pl={1} label={label} />
                      <CaretTool w={rest} label={`${label} Optionen`} />
                    </React.Fragment>
                  ))}
                </RibbonRow>
              ))}
            </Group>
            <Spacer />
            <Group $rows={2}><RibbonRow><IconTool icon="lensBig" w={42} label="Suchen" /></RibbonRow></Group>
          </Ribbon>

          <Work>
            <RulerGutter>
              <GutterTop><Icon name="rulerPlay" /></GutterTop>
              <Ruler vertical />
            </RulerGutter>
            <Canvas>
              <RulerStrip><Ruler /><PageLabel>Seite 1 / 1</PageLabel></RulerStrip>
              <Page>
                <p>Sehr geehrte Frau Kallenbach,</p>
                <p>Ihre Veranstaltung am 15.12.2025 haben wir gerne durchgeführt.</p>
                <p>Im Anhang finden Sie die Rechnung. Wir bitten Sie um Ausgleich bis zum 12. März 2025.</p>
                <p>Wir bedanken uns für Ihr Vertrauen und freuen uns Sie vielleicht schon bald wieder verwöhnen zu dürfen.</p>
                <p>Freundliche Grüße</p>
                <Signature>
                  <p>Carolin Fleiß</p>
                  {'======================================\nGraf Gastronomie  Rheinallee 1  67346 Speyer\nTelefon 06232 1234-45   Fax 06232 60046-20\nInternet: http://www.bp-event-software.com   E-Mail: basisseminar@bankettprofi.de'}
                </Signature>
              </Page>
            </Canvas>
            <Scrollbar>
              <ScrollButton aria-label="Nach oben"><Icon name="scrollUp" /></ScrollButton>
              <ScrollTrack><ScrollThumb /></ScrollTrack>
              <ScrollButton aria-label="Nach unten"><Icon name="scrollDown" /></ScrollButton>
            </Scrollbar>
          </Work>
        </Editor>
      </Panel>
    </AppWindow>
  );
}
